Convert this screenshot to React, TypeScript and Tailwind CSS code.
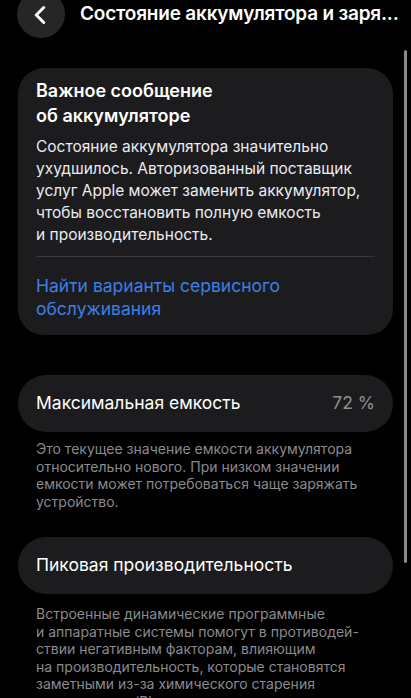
import { ChevronLeft } from "lucide-react";

export default function App() {
  return (
    <div
      className="relative h-[698px] w-[411px] overflow-hidden bg-black text-white"
      style={{ fontFamily: "Inter, 'Noto Sans', sans-serif" }}
    >
      {/* header */}
      <div className="flex h-[46px] items-start">
        <div className="ml-[17px] -mt-[10px] flex h-[48px] w-[48px] items-center justify-center rounded-full bg-[#262628]">
          <ChevronLeft className="mt-[1px] -ml-[2px] h-[30px] w-[30px] text-white" strokeWidth={2.4} />
        </div>
        <h1 className="ml-[15px] mt-0 truncate text-[19px] font-semibold tracking-[-0.2px]">
          Состояние аккумулятора и заря...
        </h1>
      </div>

      {/* scrollbar */}
      <div className="absolute right-[4px] top-[50px] h-[513px] w-[3px] rounded-full bg-[#8a8a8e]" />

      <div className="mx-[18px] mt-[22px] rounded-[26px] bg-[#1c1c1e] px-[18px] pt-[10px] pb-[15px]">
        <h2 className="text-[18px] font-semibold leading-[25px]">
          Важное сообщение
          <br />
          об аккумуляторе
        </h2>
        <p className="mt-[8px] text-[15.5px] leading-[22px] text-[#ebebf0]">
          Состояние аккумулятора значительно ухудшилось. Авторизованный поставщик услуг Apple может заменить
          аккумулятор, чтобы восстановить полную емкость
          <br />и производительность.
        </p>
        <div className="mt-[10px] h-px bg-[#38383a]" />
        <p className="mt-[17px] text-[17.5px] leading-[23px] text-[#3d7fe6]">
          Найти варианты сервисного
          <br />
          обслуживания
        </p>
      </div>

      <div className="mx-[18px] mt-[40px] flex h-[57px] items-center justify-between rounded-[28px] bg-[#1c1c1e] px-[18px]">
        <span className="text-[17.5px]">Максимальная емкость</span>
        <span className="text-[17.5px] text-[#8e8e93]">72 %</span>
      </div>
      <p className="mx-[36px] mt-[8px] text-[14px] leading-[17.5px] text-[#8a8a8f]">
        Это текущее значение емкости аккумулятора относительно нового. При низком значении емкости может
        потребоваться чаще заряжать устройство.
      </p>

      <div className="mx-[18px] mt-[27px] flex h-[57px] items-center rounded-[28px] bg-[#1c1c1e] px-[18px]">
        <span className="text-[17.5px]">Пиковая производительность</span>
      </div>
      <p className="mx-[36px] mt-[11px] text-[14px] leading-[17.5px] text-[#8a8a8f]">
        Встроенные динамические программные
        <br />и аппаратные системы помогут в противодей-
        <br />ствии негативным факторам, влияющим
        <br />на производительность, которые становятся
        <br />заметными из-за химического старения
        <br />аккумулятора iPhone.
      </p>
    </div>
  );
}
